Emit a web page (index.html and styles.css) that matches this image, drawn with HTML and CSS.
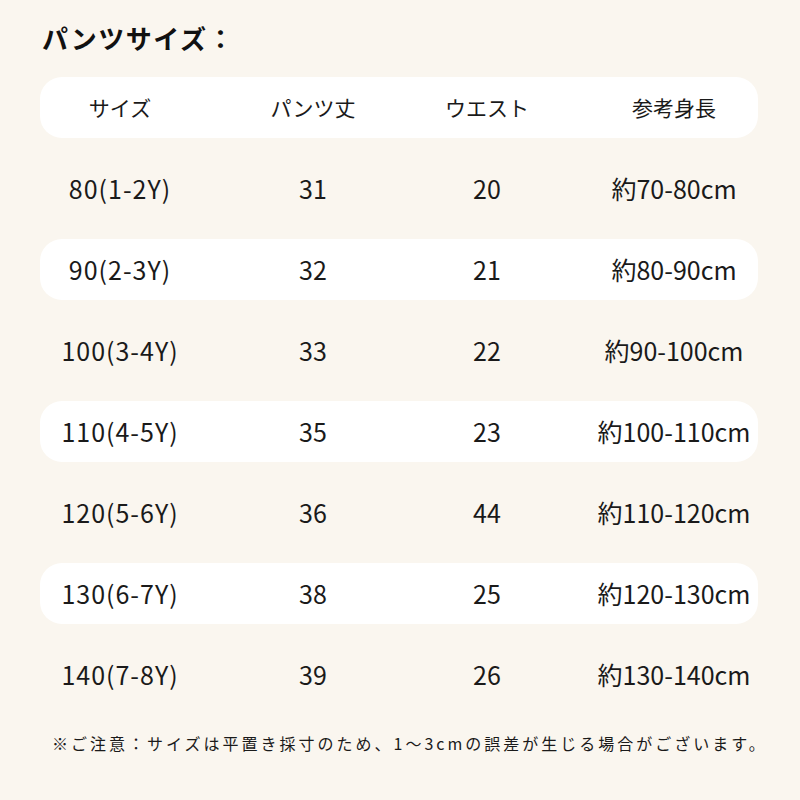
FILE: index.html
```html
<!DOCTYPE html>
<html lang="ja">
<head>
<meta charset="utf-8">
<link rel="stylesheet" href="styles.css">
</head>
<body>
<div class="page">
  <h1 class="title">パンツサイズ：</h1>
  <div class="table">
    <div class="row band head"><span>サイズ</span><span>パンツ丈</span><span>ウエスト</span><span class="c4">参考身長</span></div>
    <div class="row"><span class="c1">80(1-2Y)</span><span>31</span><span>20</span><span class="c4">約70-80cm</span></div>
    <div class="row band"><span class="c1">90(2-3Y)</span><span>32</span><span>21</span><span class="c4">約80-90cm</span></div>
    <div class="row"><span class="c1">100(3-4Y)</span><span>33</span><span>22</span><span class="c4">約90-100cm</span></div>
    <div class="row band"><span class="c1">110(4-5Y)</span><span>35</span><span>23</span><span class="c4">約100-110cm</span></div>
    <div class="row"><span class="c1">120(5-6Y)</span><span>36</span><span>44</span><span class="c4">約110-120cm</span></div>
    <div class="row band"><span class="c1">130(6-7Y)</span><span>38</span><span>25</span><span class="c4">約120-130cm</span></div>
    <div class="row"><span class="c1">140(7-8Y)</span><span>39</span><span>26</span><span class="c4">約130-140cm</span></div>
  </div>
  <p class="note">※ご注意：サイズは平置き採寸のため、1～3cmの誤差が生じる場合がございます。</p>
</div>
</body>
</html>
```

FILE: styles.css
```css
html, body {
  margin: 0;
  padding: 0;
  background: #faf6ef;
}
body {
  width: 800px;
  height: 800px;
  overflow: hidden;
  font-family: "Noto Sans CJK JP", "Noto Sans", sans-serif;
  color: #1a1a1a;
}
.page {
  padding: 20px 0 0 40px;
}
.title {
  margin: 0 0 21px 2px;
  font-size: 26px;
  line-height: 36px;
  font-weight: 700;
  letter-spacing: 1.5px;
  color: #111;
}
.table {
  display: flex;
  flex-direction: column;
  gap: 20px;
  width: 718px;
}
.row {
  display: grid;
  grid-template-columns: 160px 226px 122px 1fr;
  align-items: center;
  height: 61px;
  font-size: 25px;
  line-height: 1;
  border-radius: 22px;
}
.row span {
  text-align: center;
  white-space: nowrap;
}
.row .c1 {
  letter-spacing: 1px;
}
.row .c4 {
  padding-left: 42px;
}
.band {
  background: #ffffff;
}
.head {
  font-size: 21px;
}
.note {
  margin: 27px 0 0 12px;
  font-size: 16px;
  line-height: 22px;
  letter-spacing: 3px;
  color: #1a1a1a;
  white-space: nowrap;
}
```
